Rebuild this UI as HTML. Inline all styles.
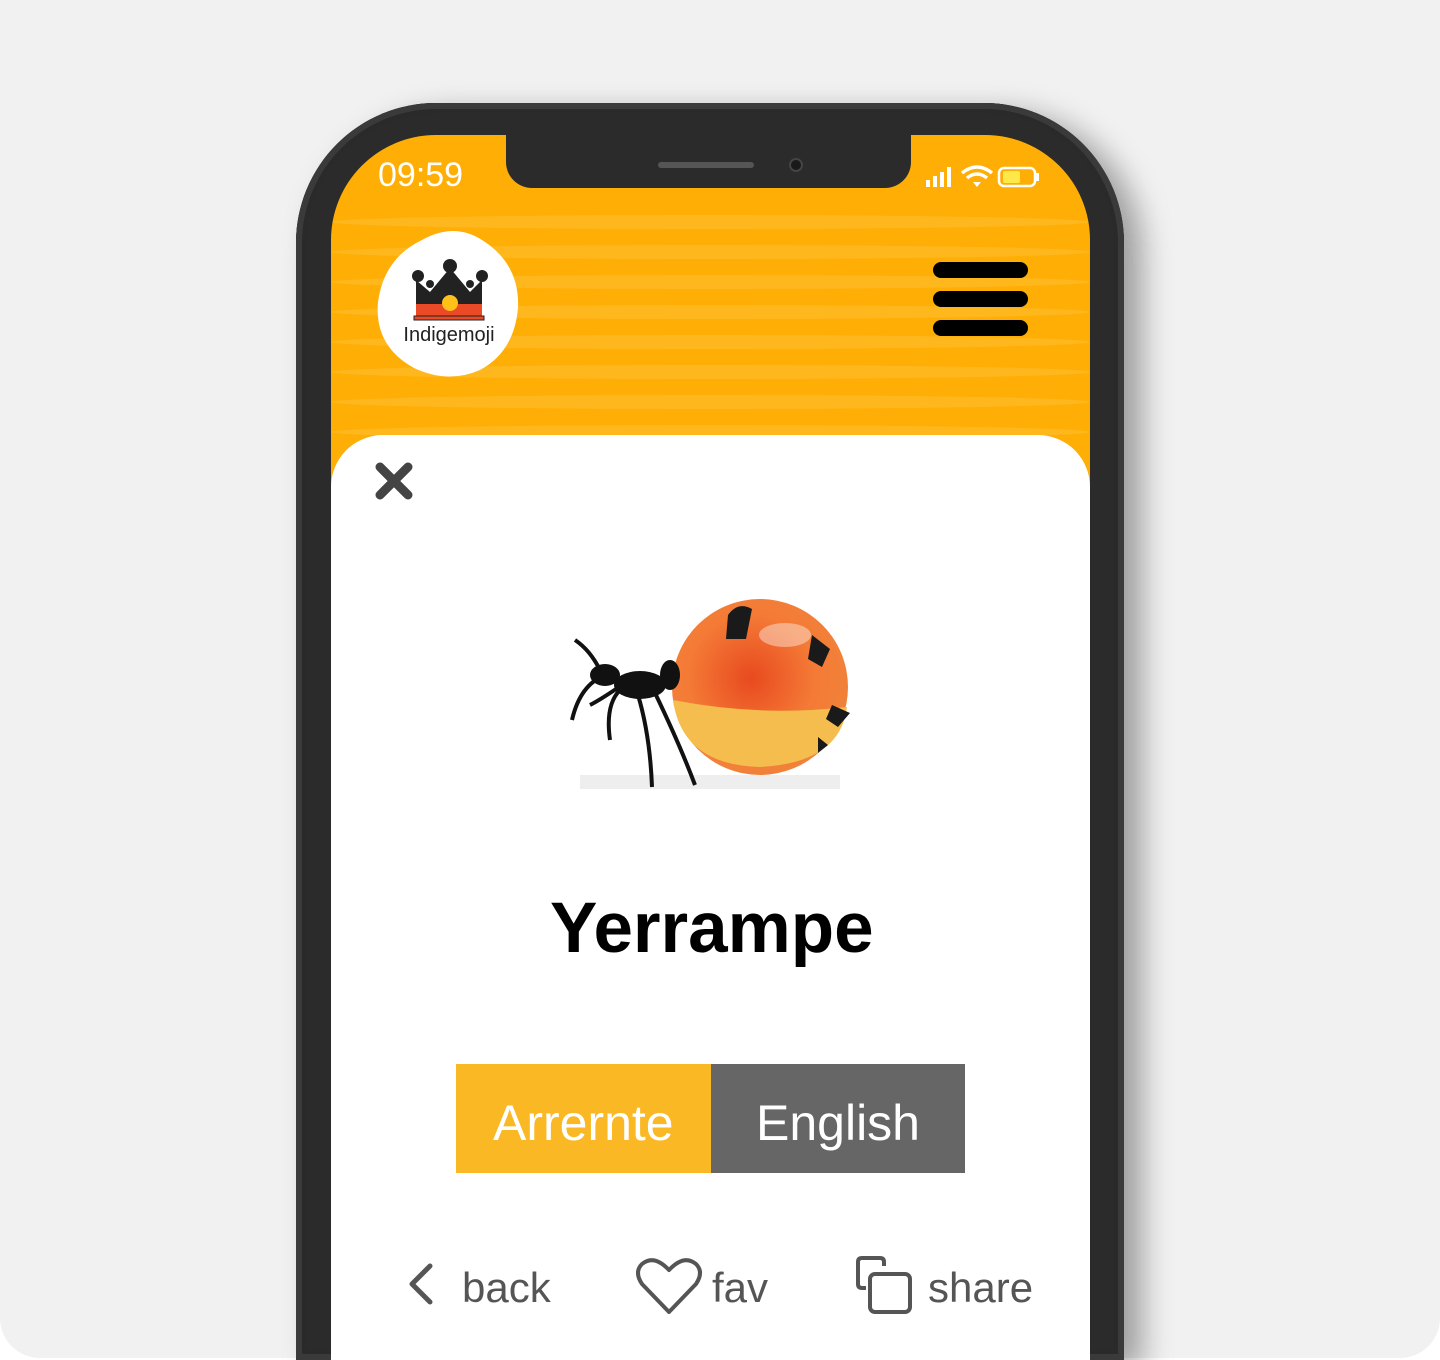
<!DOCTYPE html>
<html><head><meta charset="utf-8"><style>
*{margin:0;padding:0;box-sizing:border-box}
html,body{width:1440px;height:1360px;overflow:hidden;background:#fff}
body{font-family:"Liberation Sans",sans-serif}
.wrap{position:relative;width:1440px;height:1360px;overflow:hidden}
.bg{position:absolute;left:0;top:0;width:1440px;height:1358px;background:#f1f1f1;border-radius:0 0 40px 40px}
.phone{position:absolute;left:296px;top:103px;width:828px;height:1257px;background:#2b2b2b;border-radius:140px 140px 0 0;box-shadow:18px 10px 30px rgba(0,0,0,.35), inset 0 0 0 6px #3a3a3a, inset 0 0 0 10px #2a2a2a}
.screen{position:absolute;left:331px;top:135px;width:759px;height:1225px;border-radius:105px 105px 0 0;overflow:hidden;background:#ffae05}
.wave{position:absolute;left:0;width:100%;height:14px;background:#ffb924;border-radius:50%;opacity:.8}
.notch{position:absolute;left:506px;top:120px;width:405px;height:68px;background:#2b2b2b;border-radius:0 0 26px 26px}
.card{position:absolute;left:331px;top:435px;width:759px;height:925px;background:#fff;border-radius:52px 52px 0 0}
.t{position:absolute;white-space:nowrap}
</style></head><body><div class="wrap">
<div class="bg"></div>
<div class="phone"></div>
<div class="screen">
 <div class="wave" style="top:80px"></div><div class="wave" style="top:110px"></div><div class="wave" style="top:140px"></div><div class="wave" style="top:170px"></div><div class="wave" style="top:200px"></div><div class="wave" style="top:230px"></div><div class="wave" style="top:260px"></div><div class="wave" style="top:290px"></div>
</div>
<div class="notch"></div>
<div style="position:absolute;left:658px;top:162px;width:96px;height:6px;border-radius:3px;background:#555"></div>
<div style="position:absolute;left:789px;top:158px;width:14px;height:14px;border-radius:50%;background:#1a1a1a;border:2px solid #444"></div>
<div class="t" style="left:378px;top:156px;font-size:34px;color:#fff">09:59</div>
<svg style="position:absolute;left:924px;top:164px" width="120" height="26">
 <rect x="2" y="16" width="4" height="7" fill="#fff"/><rect x="9" y="12" width="4" height="11" fill="#fff"/><rect x="16" y="8" width="4" height="15" fill="#fff"/><rect x="23" y="3" width="4" height="20" fill="#fff"/>
 <path d="M38 9 Q53 -3 68 9" stroke="#fff" stroke-width="3.5" fill="none"/><path d="M43 14 Q53 6 63 14" stroke="#fff" stroke-width="3.5" fill="none"/><path d="M49 18 L53 23 L57 18 Z" fill="#fff"/>
 <rect x="75" y="4" width="36" height="18" rx="5" stroke="#fff" stroke-width="2.5" fill="none"/><rect x="79" y="7" width="17" height="12" rx="2" fill="#ffe94a"/><rect x="112" y="9" width="3" height="8" fill="#fff"/>
</svg>
<svg style="position:absolute;left:374px;top:228px" width="150" height="152">
 <path d="M48 12 Q80 -6 108 12 Q146 36 144 80 Q140 124 106 142 Q74 156 40 140 Q0 118 4 74 Q10 30 48 12Z" fill="#fff"/>
 <path d="M42 52 L56 64 L76 40 L96 64 L108 52 L108 76 L42 76Z" fill="#222"/>
 <circle cx="44" cy="48" r="6" fill="#222"/><circle cx="76" cy="38" r="7" fill="#222"/><circle cx="108" cy="48" r="6" fill="#222"/><circle cx="56" cy="56" r="4" fill="#222"/><circle cx="96" cy="56" r="4" fill="#222"/>
 <rect x="42" y="76" width="66" height="12" fill="#ea4a26"/><rect x="40" y="88" width="70" height="4" fill="#ea4a26" stroke="#222"/>
 <circle cx="76" cy="75" r="8" fill="#ffc019"/>
 <text x="75" y="113" text-anchor="middle" font-family="Liberation Sans" font-size="20" fill="#222">Indigemoji</text>
</svg>
<div style="position:absolute;left:933px;top:262px;width:95px;height:16px;background:#000;border-radius:8px"></div>
<div style="position:absolute;left:933px;top:291px;width:95px;height:16px;background:#000;border-radius:8px"></div>
<div style="position:absolute;left:933px;top:320px;width:95px;height:16px;background:#000;border-radius:8px"></div>
<div class="card"></div>
<svg style="position:absolute;left:374px;top:462px" width="40" height="38"><path d="M6 5 L34 33 M34 5 L6 33" stroke="#444" stroke-width="9" stroke-linecap="round"/></svg>
<svg style="position:absolute;left:560px;top:595px" width="300" height="200">
 <defs><radialGradient id="g" cx="0.45" cy="0.45" r="0.6"><stop offset="0" stop-color="#e84a1f"/><stop offset=".6" stop-color="#f47a36"/><stop offset="1" stop-color="#f0833a"/></radialGradient></defs>
 <rect x="20" y="180" width="260" height="14" fill="#eee"/>
 <circle cx="200" cy="92" r="88" fill="url(#g)"/>
 <path d="M113 105 Q200 122 287 112 Q280 168 200 172 Q122 170 113 105Z" fill="#f5bd4d"/>
 <ellipse cx="225" cy="40" rx="26" ry="12" fill="#fff" opacity=".4"/>
 <path d="M168 20 Q178 6 192 14 L186 44 L166 44Z M252 40 L270 54 L262 72 L248 64Z M272 110 L290 118 L278 132 L266 124Z M258 142 L268 150 L258 158Z" fill="#1a1a1a"/>
 <ellipse cx="80" cy="90" rx="26" ry="14" fill="#111"/><ellipse cx="45" cy="80" rx="15" ry="11" fill="#111"/><ellipse cx="110" cy="80" rx="10" ry="15" fill="#111"/>
 <path d="M40 75 Q30 55 15 45 M45 80 Q20 90 12 125 M60 95 Q45 110 50 145 M78 100 Q90 140 92 192 M95 98 Q120 150 135 190 M62 90 Q40 105 30 110" stroke="#111" stroke-width="4" fill="none"/>
</svg>
<div class="t" style="left:550px;top:888px;font-size:71px;font-weight:bold;color:#000">Yerrampe</div>
<div style="position:absolute;left:456px;top:1064px;width:255px;height:109px;background:#f9b824"></div>
<div style="position:absolute;left:711px;top:1064px;width:254px;height:109px;background:#666"></div>
<div class="t" style="left:493px;top:1094px;font-size:50px;color:#fff">Arrernte</div>
<div class="t" style="left:756px;top:1094px;font-size:50px;color:#fff">English</div>
<svg style="position:absolute;left:404px;top:1262px" width="32" height="44"><path d="M26 4 L8 22 L26 40" stroke="#555" stroke-width="5" fill="none" stroke-linejoin="round" stroke-linecap="round"/></svg>
<div class="t" style="left:462px;top:1264px;font-size:42px;color:#555">back</div>
<svg style="position:absolute;left:634px;top:1256px" width="70" height="60"><path d="M35 56 L8 28 Q0 16 8 8 Q20 -2 35 14 Q50 -2 62 8 Q70 16 62 28 Z" stroke="#555" stroke-width="4" fill="none" stroke-linejoin="round"/></svg>
<div class="t" style="left:712px;top:1264px;font-size:42px;color:#555">fav</div>
<svg style="position:absolute;left:854px;top:1254px" width="62" height="64"><path d="M12 34 H8 Q4 34 4 30 V8 Q4 4 8 4 H26 Q30 4 30 8 V12" stroke="#555" stroke-width="4" fill="none"/><rect x="16" y="20" width="40" height="38" rx="5" stroke="#555" stroke-width="4" fill="none"/></svg>
<div class="t" style="left:928px;top:1264px;font-size:42px;color:#555">share</div>
</div></body></html>
